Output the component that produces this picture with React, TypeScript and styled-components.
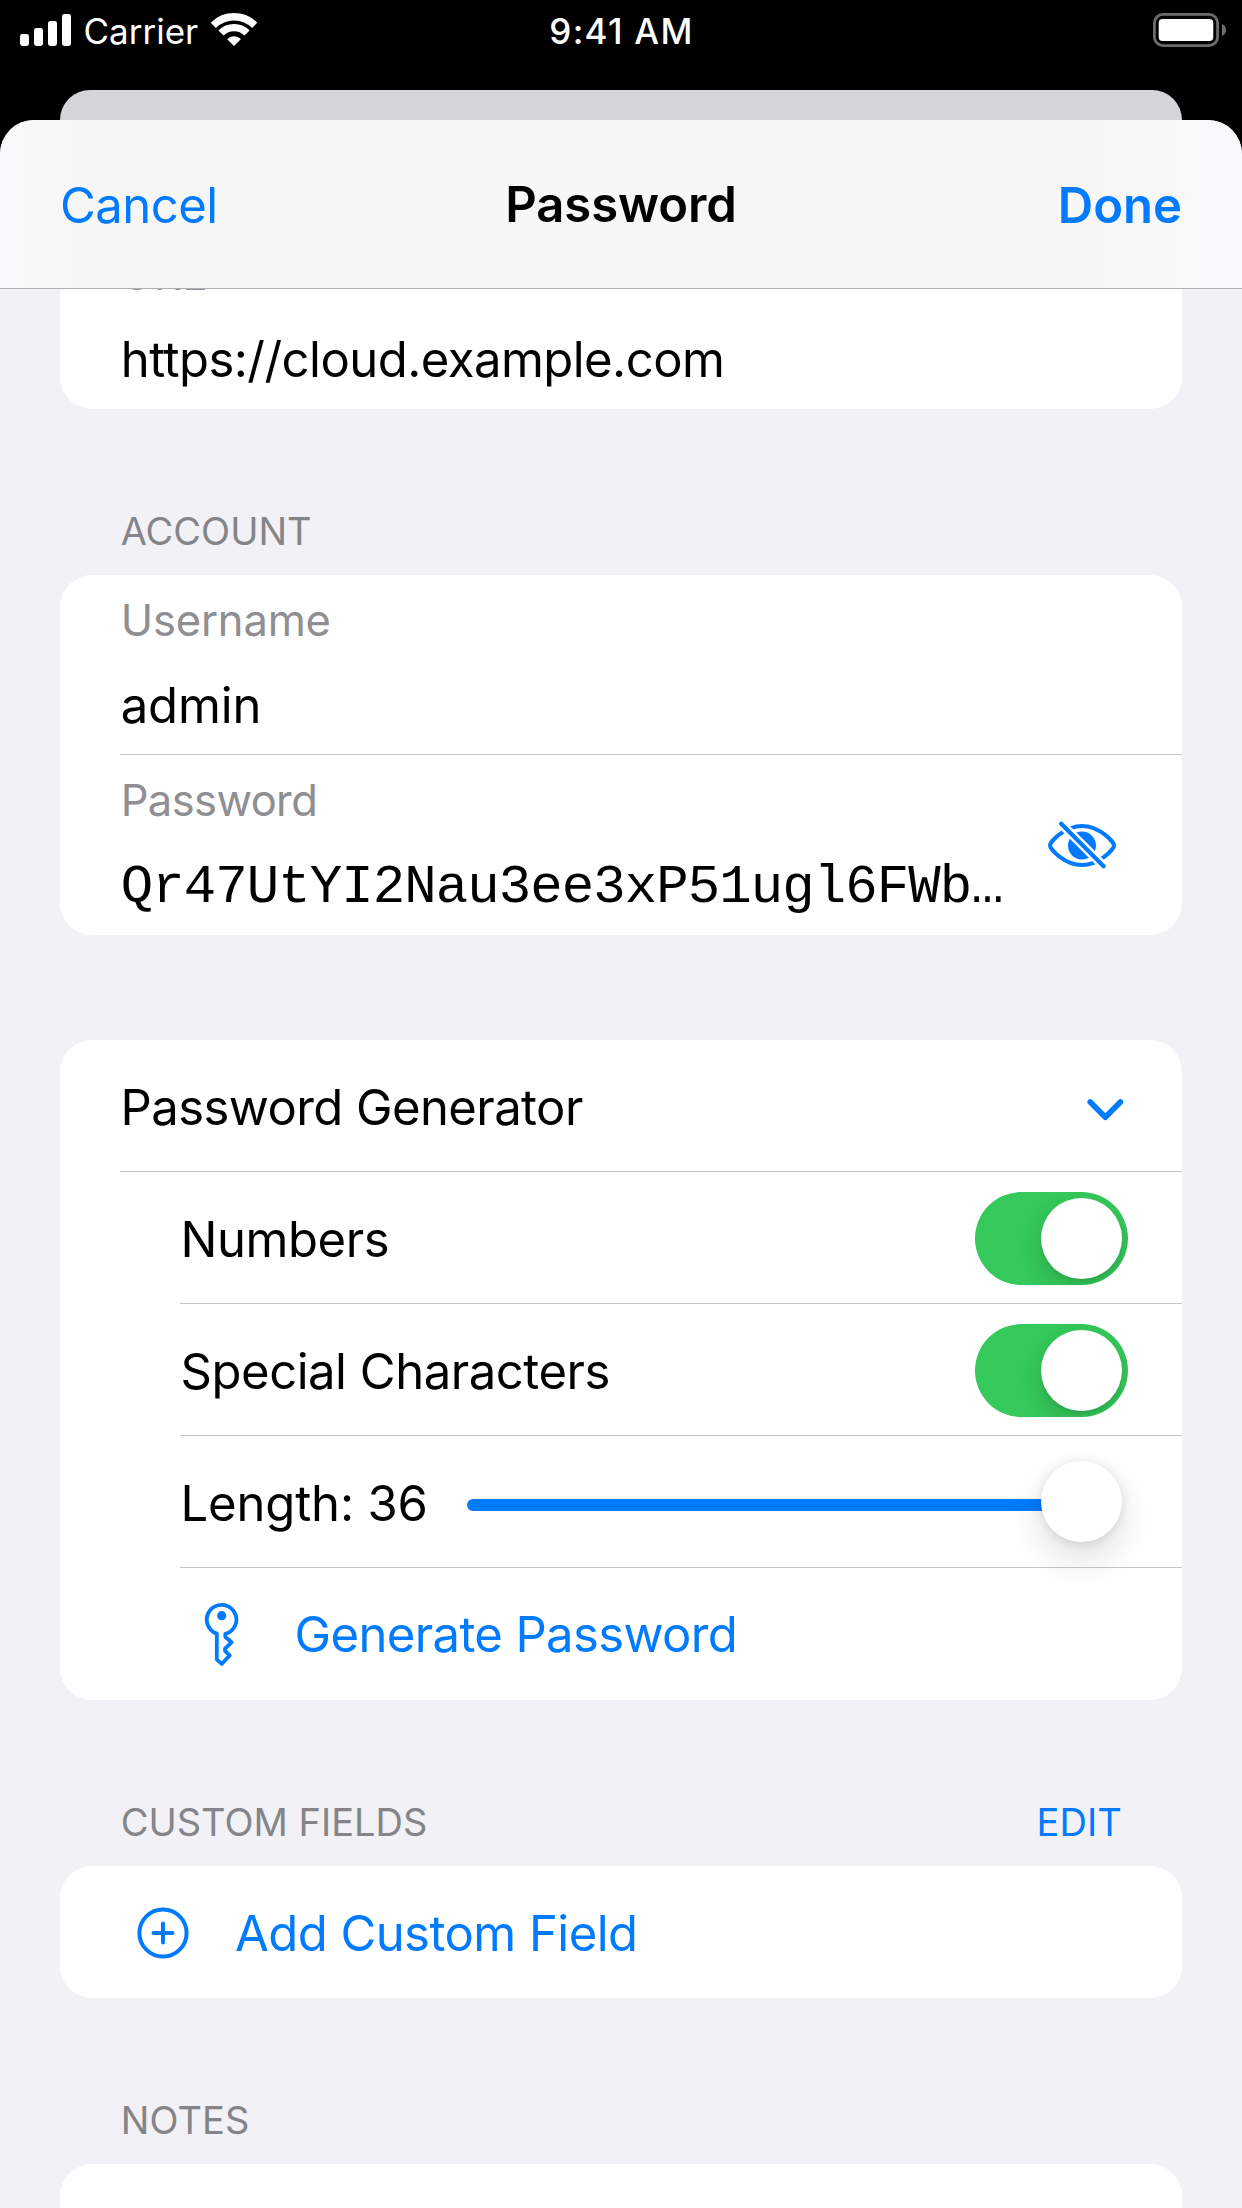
import React from "react";
import styled, { createGlobalStyle } from "styled-components";

const BLUE = "#007aff";

const Global = createGlobalStyle`
  * { box-sizing: border-box; }
  html, body { margin: 0; padding: 0; background: #000; }
  body { font-family: Inter, "Liberation Sans", sans-serif; color: #000; }
  svg { display: block; flex: none; }
`;

const Screen = styled.div`
  width: 1242px;
  height: 2208px;
  overflow: hidden;
  background: #000;
  display: flex;
  flex-direction: column;
`;

/* ---------- status bar ---------- */

const StatusBar = styled.header`
  flex: none;
  height: 90px;
  padding: 13px 15px 0 20px;
  display: grid;
  grid-template-columns: 1fr auto 1fr;
  align-items: start;
  color: #fff;
  font-size: 35px;
  line-height: 36px;
`;

const StatusLeft = styled.div`
  display: flex;
`;

const Carrier = styled.span`
  margin: 0 13px 0 12.5px;
`;

const Clock = styled.span`
  font-weight: 500;
  letter-spacing: 1.3px;
  margin-left: -4px;
`;

const StatusRight = styled.div`
  display: flex;
  justify-content: flex-end;
`;

/* ---------- sheets ---------- */

const BackSheet = styled.div`
  flex: none;
  height: 30px;
  margin: 0 60px;
  border-radius: 32px 32px 0 0;
  background: #d5d4d9;
`;

const Sheet = styled.main`
  flex: 1;
  min-height: 0;
  display: flex;
  flex-direction: column;
  overflow: hidden;
  border-radius: 34px 34px 0 0;
  background: #f2f1f6;
`;

const NavBar = styled.nav`
  flex: none;
  height: 169px;
  padding: 3px 60px 0;
  display: grid;
  grid-template-columns: 1fr auto 1fr;
  align-items: center;
  border-bottom: 1px solid #b0b0b4;
  background: linear-gradient(90deg, #f9f9fb 0, #f6f6f6 110px, #f7f7f7 500px, #f7f7f7 1100px, #f9f9fb 1210px);
  font-size: 49px;
  line-height: 60px;
`;

const NavAction = styled.a<{ $strong?: boolean }>`
  color: ${BLUE};
  font-weight: ${(p) => (p.$strong ? 600 : 400)};
  letter-spacing: ${(p) => (p.$strong ? "0" : "-0.5px")};
  text-align: ${(p) => (p.$strong ? "right" : "left")};
`;

const NavTitle = styled.h1`
  margin: -2px 0 0;
  font-size: 49px;
  font-weight: 600;
  letter-spacing: -0.1px;
`;

const Scroll = styled.div`
  flex: 1;
  min-height: 0;
  overflow: hidden;
  padding: 0 60px;
`;

const Content = styled.div`
  margin-top: -60px;
`;

/* ---------- grouped list ---------- */

const Card = styled.section<{ $top?: number; $height?: number }>`
  margin-top: ${(p) => p.$top ?? 0}px;
  ${(p) => (p.$height ? `height: ${p.$height}px;` : "")}
  border-radius: 32px;
  background: #fff;
`;

const SectionHeader = styled.div`
  height: 166px;
  padding: 0 60px 14px 60.7px;
  display: flex;
  justify-content: space-between;
  align-items: flex-end;
  font-size: 38px;
  line-height: 60px;
  color: #858589;
`;

const SectionTitle = styled.span<{ $track?: number }>`
  letter-spacing: ${(p) => p.$track ?? 0}px;
`;

const SectionAction = styled.a`
  color: ${BLUE};
  letter-spacing: 0.1px;
`;

const Field = styled.div<{ $divided?: boolean }>`
  height: 180px;
  margin-left: 60px;
  display: flex;
  align-items: center;
  border-bottom: ${(p) => (p.$divided ? "1px solid #c6c6c8" : "none")};
`;

const FieldText = styled.div`
  align-self: flex-start;
  width: 907px;
  padding: 15px 0 0 0.7px;
  display: grid;
  row-gap: 26px;
  line-height: 60px;
  white-space: nowrap;
`;

const FieldLabel = styled.span<{ $track?: number }>`
  font-size: 43.5px;
  color: #8e8e93;
  letter-spacing: ${(p) => p.$track ?? 0}px;
`;

const FieldValue = styled.span<{ $track?: number }>`
  font-size: 49px;
  letter-spacing: ${(p) => p.$track ?? 0}px;
`;

const MonoValue = styled.span`
  font-family: "Liberation Mono", monospace;
  font-size: 54px;
  line-height: 64px;
  letter-spacing: -0.9px;
`;

const EyeButton = styled.span`
  margin-left: 20px;
`;

const Row = styled.div<{ $indent: number; $divided?: boolean }>`
  height: 132px;
  margin-left: ${(p) => p.$indent}px;
  padding: 3px 54px 0 0;
  display: flex;
  align-items: center;
  border-bottom: ${(p) => (p.$divided ? "1px solid #c6c6c8" : "none")};
  font-size: 49px;
  line-height: 60px;
  white-space: nowrap;
`;

const RowLabel = styled.span<{ $track?: number; $action?: boolean; $lift?: number }>`
  letter-spacing: ${(p) => p.$track ?? 0}px;
  padding-left: ${(p) => (p.$action ? 0 : 0.5)}px;
  margin-top: ${(p) => (p.$action ? -(p.$lift ?? 0) : 2)}px;
  color: ${(p) => (p.$action ? BLUE : "#000")};
`;

const Push = styled.span`
  margin-left: auto;
`;

const ChevronSlot = styled(Push)`
  margin-right: 4px;
  margin-top: 5px;
`;

const Toggle = styled.span`
  margin-left: auto;
  margin-top: -2px;
  width: 153px;
  height: 93px;
  padding: 6px;
  display: flex;
  justify-content: flex-end;
  overflow: hidden;
  border-radius: 47px;
  background: #35c85a;
`;

const Knob = styled.span`
  width: 81px;
  height: 81px;
  border-radius: 50%;
  background: #fff;
  box-shadow: 0 9px 24px rgba(0, 0, 0, 0.15), 0 3px 3px rgba(0, 0, 0, 0.06);
`;

const Slider = styled.div`
  position: relative;
  z-index: 1;
  flex: 1;
  display: flex;
  align-items: center;
  margin-left: 39px;
  margin-right: 6px;
`;

const Track = styled.span`
  flex: 1;
  height: 12px;
  margin: 3px -6px 0 0;
  border-radius: 6px;
  background: ${BLUE};
`;

const Thumb = styled.span`
  position: relative;
  flex: none;
  width: 81px;
  height: 81px;
  margin-top: -3px;
  border-radius: 50%;
  background: #fff;
  box-shadow: 0 1.5px 12px rgba(0, 0, 0, 0.12), 0 18px 39px rgba(0, 0, 0, 0.12);
`;

const IconSlot = styled.span<{ $width: number; $offset: number }>`
  flex: none;
  width: ${(p) => p.$width}px;
  padding-left: ${(p) => p.$offset}px;
  margin-top: -1px;
`;

/* ---------- icons ---------- */

const SignalIcon = () => (
  <svg width="51" height="33" viewBox="0 0 51 33" fill="#fff">
    <rect x="0" y="21" width="9" height="12" rx="2.4" />
    <rect x="14" y="15" width="9" height="18" rx="2.4" />
    <rect x="28" y="8" width="9" height="25" rx="2.4" />
    <rect x="42" y="1" width="9" height="32" rx="2.4" />
  </svg>
);

const WifiIcon = () => (
  <svg width="46" height="34" viewBox="0 0 46 34" fill="none" stroke="#fff">
    <path d="M2.3 12.3A29.3 29.3 0 0 1 43.7 12.3" strokeWidth="7.3" />
    <path d="M10 20A18.4 18.4 0 0 1 36 20" strokeWidth="7.3" />
    <path d="M23 33L16.2 26.2C20 22.2 26 22.2 29.8 26.2Z" fill="#fff" stroke="none" />
  </svg>
);

const BatteryIcon = () => (
  <svg width="74" height="34" viewBox="0 0 74 34">
    <rect x="1.4" y="1.4" width="63.2" height="31.2" rx="8.5" fill="none" stroke="#6c6c6c" strokeWidth="2.8" />
    <rect x="5.7" y="6" width="54.6" height="22" rx="4" fill="#fff" />
    <path d="M69 11C74.3 12.5 74.3 21.5 69 23Z" fill="#6c6c6c" />
  </svg>
);

const EyeSlashIcon = () => (
  <svg width="70" height="49" viewBox="0 0 70 49" fill="none">
    <path
      d="M3 24.5C3 21 17.5 5 35 5S67 21 67 24.5 52.5 44 35 44 3 28 3 24.5Z"
      stroke={BLUE}
      strokeWidth="4"
    />
    <circle cx="35" cy="24.6" r="14" fill={BLUE} />
    <path d="M11 -0.5L60 48.5" stroke="#fff" strokeWidth="9" />
    <path d="M14.2 2.7L56.6 45.3" stroke={BLUE} strokeWidth="4.2" strokeLinecap="round" />
  </svg>
);

const ChevronIcon = () => (
  <svg width="38" height="24" viewBox="0 0 38 24" fill="none">
    <path
      d="M4.2 4L19.3 19.3L34.4 4"
      stroke={BLUE}
      strokeWidth="5.6"
      strokeLinecap="round"
      strokeLinejoin="round"
    />
  </svg>
);

const KeyIcon = () => (
  <svg width="36" height="66" viewBox="0 0 36 66" fill="none">
    <path
      d="M12.8 31.6V57.3L17.7 62L25.7 53.4L21 48.8V46.7L27.6 40.3L21.3 35V31.9A14.8 14.8 0 1 0 12.8 31.6Z"
      stroke={BLUE}
      strokeWidth="3.8"
      strokeLinejoin="round"
    />
    <circle cx="17.7" cy="13.7" r="4.6" fill={BLUE} />
  </svg>
);

const PlusCircleIcon = () => (
  <svg width="52" height="52" viewBox="0 0 52 52" fill="none" stroke={BLUE} strokeWidth="4">
    <circle cx="26" cy="26" r="23.6" />
    <path d="M16.5 26H35.5M26 16.5V35.5" strokeLinecap="round" />
  </svg>
);

/* ---------- screen ---------- */

export default function App() {
  return (
    <>
      <Global />
      <Screen>
        <StatusBar>
          <StatusLeft>
            <SignalIcon />
            <Carrier>Carrier</Carrier>
            <WifiIcon />
          </StatusLeft>
          <Clock>9:41 AM</Clock>
          <StatusRight>
            <BatteryIcon />
          </StatusRight>
        </StatusBar>
        <BackSheet />
        <Sheet>
          <NavBar>
            <NavAction>Cancel</NavAction>
            <NavTitle>Password</NavTitle>
            <NavAction $strong>Done</NavAction>
          </NavBar>
          <Scroll>
            <Content>
              <Card>
                <Field>
                  <FieldText>
                    <FieldLabel $track={0.6}>URL</FieldLabel>
                    <FieldValue $track={-0.53}>https://cloud.example.com</FieldValue>
                  </FieldText>
                </Field>
              </Card>

              <SectionHeader>
                <SectionTitle>ACCOUNT</SectionTitle>
              </SectionHeader>
              <Card>
                <Field $divided>
                  <FieldText>
                    <FieldLabel $track={-0.15}>Username</FieldLabel>
                    <FieldValue $track={-0.1}>admin</FieldValue>
                  </FieldText>
                </Field>
                <Field>
                  <FieldText>
                    <FieldLabel $track={-0.6}>Password</FieldLabel>
                    <MonoValue>Qr47UtYI2Nau3ee3xP51ugl6FWb…</MonoValue>
                  </FieldText>
                  <EyeButton>
                    <EyeSlashIcon />
                  </EyeButton>
                </Field>
              </Card>

              <Card $top={105}>
                <Row $indent={60} $divided>
                  <RowLabel $track={-0.57}>Password Generator</RowLabel>
                  <ChevronSlot>
                    <ChevronIcon />
                  </ChevronSlot>
                </Row>
                <Row $indent={120} $divided>
                  <RowLabel $track={-0.45}>Numbers</RowLabel>
                  <Toggle>
                    <Knob />
                  </Toggle>
                </Row>
                <Row $indent={120} $divided>
                  <RowLabel $track={-0.46}>Special Characters</RowLabel>
                  <Toggle>
                    <Knob />
                  </Toggle>
                </Row>
                <Row $indent={120} $divided>
                  <RowLabel $track={-0.15}>Length: 36</RowLabel>
                  <Slider>
                    <Track />
                    <Thumb />
                  </Slider>
                </Row>
                <Row $indent={120}>
                  <IconSlot $width={114.5} $offset={24}>
                    <KeyIcon />
                  </IconSlot>
                  <RowLabel $track={-0.62} $action $lift={2}>
                    Generate Password
                  </RowLabel>
                </Row>
              </Card>

              <SectionHeader>
                <SectionTitle>CUSTOM FIELDS</SectionTitle>
                <SectionAction>EDIT</SectionAction>
              </SectionHeader>
              <Card>
                <Row $indent={60}>
                  <IconSlot $width={115} $offset={16.5}>
                    <PlusCircleIcon />
                  </IconSlot>
                  <RowLabel $track={-0.54} $action>
                    Add Custom Field
                  </RowLabel>
                </Row>
              </Card>

              <SectionHeader>
                <SectionTitle $track={0.1}>NOTES</SectionTitle>
              </SectionHeader>
              <Card $height={132} />
            </Content>
          </Scroll>
        </Sheet>
      </Screen>
    </>
  );
}
